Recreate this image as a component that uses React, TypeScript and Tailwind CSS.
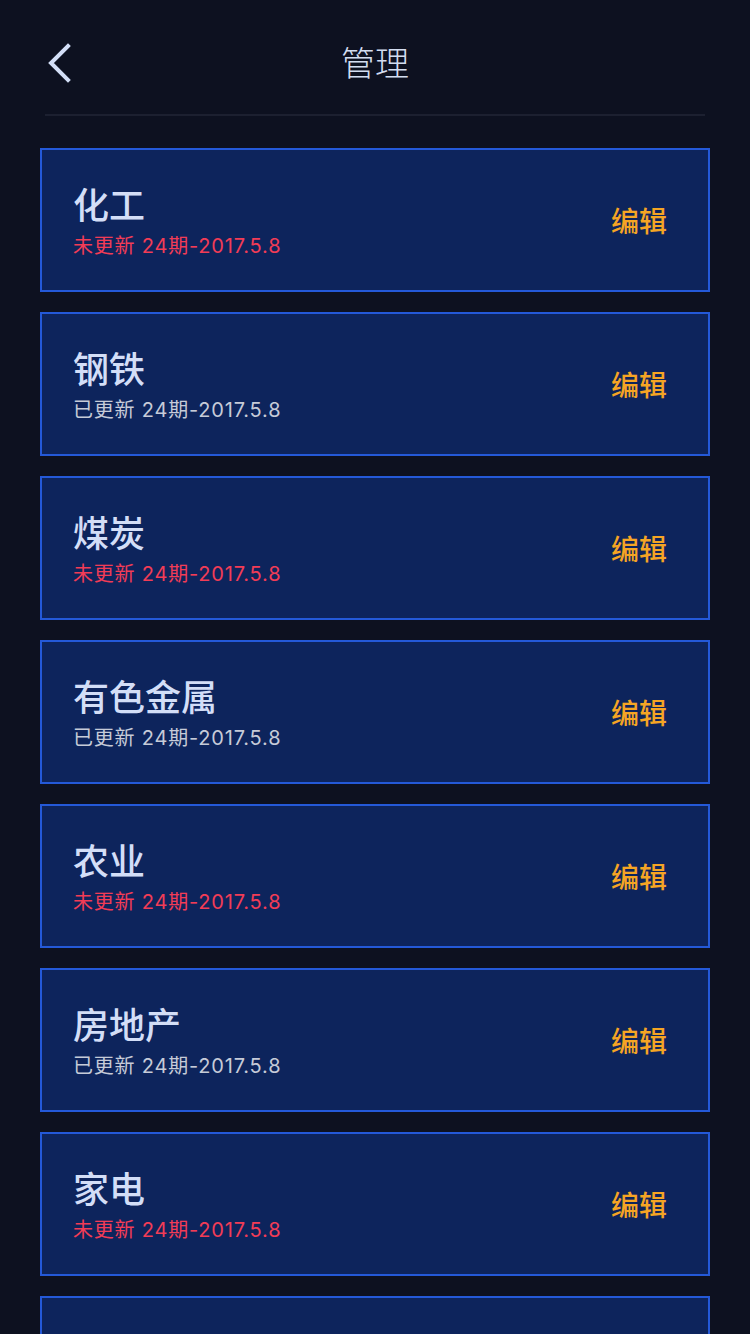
import React from "react";

const items = [
  { name: "化工", updated: false },
  { name: "钢铁", updated: true },
  { name: "煤炭", updated: false },
  { name: "有色金属", updated: true },
  { name: "农业", updated: false },
  { name: "房地产", updated: true },
  { name: "家电", updated: false },
];

export default function App() {
  return (
    <div
      className="min-h-[1334px] w-[750px] bg-[#0d1120] overflow-hidden"
      style={{ fontFamily: '"Noto Sans CJK SC", "Noto Sans", sans-serif' }}
    >
      <div className="relative h-[116px] mx-[45px] border-b-2 border-[#1c2030] flex items-center justify-center">
        <svg
          className="absolute left-[1px] top-[42px]"
          width="28"
          height="42"
          viewBox="0 0 28 42"
          fill="none"
        >
          <path
            d="M22 4 L5 21 L22 38"
            stroke="#d3dff7"
            strokeWidth="4"
            strokeLinecap="square"
            strokeLinejoin="miter"
          />
        </svg>
        <div className="text-[34px] leading-[40px] text-[#d3ddf0] font-light mt-[10px]">管理</div>
      </div>
      <div className="flex flex-col gap-[20px] px-[40px] pt-[32px]">
        {items.map((it) => (
          <div
            key={it.name}
            className="h-[144px] border-2 border-[#2459d8] bg-[#0d245c] flex items-center justify-between pl-[31px] pr-[41px]"
          >
            <div className="flex flex-col">
              <div className="text-[36px] leading-[40px] text-[#d3def7] font-medium">{it.name}</div>
              <div
                className={
                  "mt-[11px] text-[20px] leading-[24px] tracking-[0.8px] " +
                  (it.updated ? "text-[#c6cbd8]" : "text-[#f23c56]")
                }
                style={{ fontFamily: 'Inter, "Noto Sans CJK SC", sans-serif' }}
              >
                {it.updated ? "已更新" : "未更新"} 24期-2017.5.8
              </div>
            </div>
            <div className="text-[28px] leading-[32px] text-[#f5a524] font-medium">编辑</div>
          </div>
        ))}
        <div className="h-[144px] border-2 border-[#2459d8] bg-[#0d245c]" />
      </div>
    </div>
  );
}
